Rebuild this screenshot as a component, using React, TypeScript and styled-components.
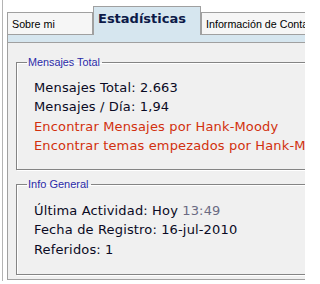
import React from "react";
import styled, { createGlobalStyle } from "styled-components";

const GlobalStyle = createGlobalStyle`
	html, body {
		margin: 0;
		padding: 0;
		background: #ffffff;
		overflow: hidden;
	}
`;

const Page = styled.div`
	width: 305px;
	height: 284px;
	padding-left: 2px;
	box-sizing: border-box;
	overflow: hidden;
`;

const Frame = styled.div`
	height: 281px;
	border-left: 1px solid #b4b4b4;
	padding-left: 4px;
	width: 420px;
	box-sizing: border-box;
`;

const TabRow = styled.div`
	display: flex;
	align-items: flex-start;
	height: 35px;
`;

const Tab = styled.div<{ $active?: boolean }>`
	box-sizing: border-box;
	border: 1px solid #a0a0a0;
	border-bottom: ${(p) => (p.$active ? "none" : "1px solid #a0a0a0")};
	background: ${(p) => (p.$active ? "#d6e6ef" : "#f6f6f6")};
	margin-top: ${(p) => (p.$active ? "6px" : "12px")};
	height: ${(p) => (p.$active ? "29px" : "23px")};
	font-family: ${(p) =>
		p.$active ? '"DejaVu Sans", Verdana, sans-serif' : '"Liberation Sans", Arial, sans-serif'};
	font-size: ${(p) => (p.$active ? "13px" : "10.7px")};
	font-weight: ${(p) => (p.$active ? "bold" : "normal")};
	color: ${(p) => (p.$active ? "#0c1a48" : "#000000")};
	padding: ${(p) => (p.$active ? "4px 0 0 4px" : "5px 0 0 4px")};
	white-space: nowrap;
	flex: none;
`;

const Strip = styled.div`
	height: 7px;
	background: #d6e6ef;
	border-left: 1px solid #a0a0a0;
`;

const Panel = styled.div`
	box-sizing: border-box;
	height: 238px;
	background: #f0f0f0;
	border: 1px solid #a0a0a0;
	padding: 12px 0 0 8px;
`;

const Group = styled.fieldset<{ $gap?: number }>`
	margin: 0 0 ${(p) => p.$gap ?? 0}px 0;
	border: 1px solid #848484;
	box-shadow: 1px 1px 0 #ffffff, inset 1px 1px 0 #ffffff;
	padding: 0;
	min-width: 0;
`;

const Legend = styled.legend<{ $small?: boolean }>`
	margin-left: 10px;
	padding: 0 2px 0 1px;
	font-family: "Liberation Sans", Arial, sans-serif;
	font-size: ${(p) => (p.$small ? "11px" : "10.8px")};
	line-height: ${(p) => (p.$small ? "13px" : "14px")};
	color: #2b2ba8;
`;

const Lines = styled.div<{ $top: number; $bottom: number }>`
	padding: ${(p) => p.$top}px 0 ${(p) => p.$bottom}px 17px;
	font-family: "DejaVu Sans", Verdana, sans-serif;
	font-size: 13px;
	letter-spacing: 0.15px;
	line-height: 19.3px;
	color: #0a0a24;
	white-space: nowrap;
`;

const Line = styled.div<{ $link?: boolean }>`
	color: ${(p) => (p.$link ? "#d2300e" : "inherit")};
`;

const Time = styled.span`
	color: #6a6a82;
`;

export default function App() {
	return (
		<Page>
			<GlobalStyle />
			<Frame>
				<TabRow>
					<Tab style={{ width: 86 }}>Sobre mi</Tab>
					<Tab $active style={{ width: 108 }}>
						Estadísticas
					</Tab>
					<Tab style={{ width: 160 }}>Información de Contacto</Tab>
				</TabRow>
				<Strip />
				<Panel>
					<Group $gap={8}>
						<Legend>Mensajes Total</Legend>
						<Lines $top={9} $bottom={14}>
							<Line>Mensajes Total: 2.663</Line>
							<Line>Mensajes / Día: 1,94</Line>
							<Line $link>Encontrar Mensajes por Hank-Moody</Line>
							<Line $link>Encontrar temas empezados por Hank-Moody</Line>
						</Lines>
					</Group>
					<Group>
						<Legend $small>Info General</Legend>
						<Lines $top={10} $bottom={15}>
							<Line>
								Última Actividad: Hoy <Time>13:49</Time>
							</Line>
							<Line>Fecha de Registro: 16-jul-2010</Line>
							<Line>Referidos: 1</Line>
						</Lines>
					</Group>
				</Panel>
			</Frame>
		</Page>
	);
}
